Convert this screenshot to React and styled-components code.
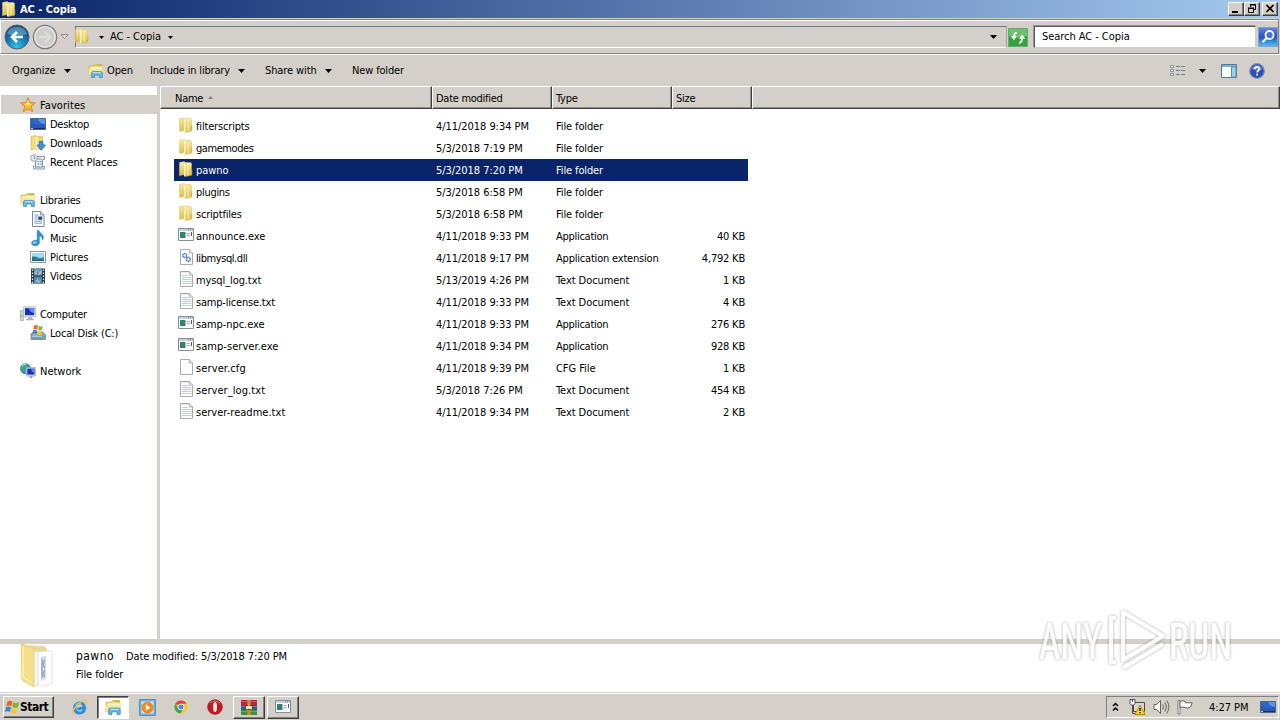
import React from "react";
import styled, { createGlobalStyle, css } from "styled-components";

const FACE = "#d4cfc8";

const GlobalStyle = createGlobalStyle`
  * {
    box-sizing: border-box;
  }

  body {
    margin: 0;
    overflow: hidden;
    background: #fff;
    color: #000;
    font-family: "DejaVu Sans Condensed", "DejaVu Sans", sans-serif;
    font-stretch: condensed;
    font-size: 11px;
    line-height: 16px;
    letter-spacing: -0.3px;
    white-space: nowrap;
  }

  svg {
    display: block;
    flex: none;
  }
`;

/* ---------- icons ---------- */

const FolderIcon = ({ size = 16 }) => (
  <svg width={size} height={size} viewBox="0 0 16 16">
    <defs>
      <linearGradient id="folderSide" x1="0" x2="0" y1="0" y2="1">
        <stop offset="0" stopColor="#f8eba6" />
        <stop offset="1" stopColor="#dcbc4c" />
      </linearGradient>
    </defs>
    <path d="M1.500 1.500 6.500.500v13L1.500 14.500z" fill="url(#folderSide)" stroke="#dcc468" strokeWidth=".5" />
    <path d="M7 1.500h5.500l1 1v11.800L7 15.500z" fill="url(#folderSide)" stroke="#d8bd5c" strokeWidth=".5" />
    <path d="M6 1.500h1.600v13.600l-1.600.5z" fill="#fdf2b8" />
    <path d="M10 2.500v11.500" stroke="#f7e898" strokeWidth="1.400" />
    <path d="M13.200 8.500h1v5h-1z" fill="#cfae47" />
  </svg>
);

const LibraryIcon = ({ size = 16 }) => (
  <svg width={size} height={size} viewBox="0 0 16 16">
    <path d="M1 3h5l1-1.500h7V12H1z" fill="#f3da78" stroke="#c9a944" strokeWidth=".7" />
    <path d="M2.500 4.200h11.800v5H2.500z" fill="#fff6c5" />
    <path d="M9 2.400h4" stroke="#7fc387" />
    <path d="M.8 6h13.800v6H.8z" fill="#f8e595" />
    <path d="M3.500 14.500V10q0-1.500 1.500-1.500h7.500q1.800 0 1.800 1.500v4.500h-3V12H6.500v2.500z" fill="#66b9e3" stroke="#3a86b8" strokeWidth=".7" />
    <path d="M5 9.700h7.800" stroke="#c3ebfa" />
  </svg>
);

const StarIcon = () => (
  <svg width="16" height="16" viewBox="0 0 16 16">
    <path d="m8 .8 2 4.900 5.400.3-4.100 3.400 1.400 5.300L8 11.800l-4.700 2.900 1.400-5.300L.6 6 6 5.700z" fill="#fcbf35" stroke="#e57d20" />
    <path d="m8 3 1.200 3.700 3.200.3-4.400 1-4-.9L6.800 6.600z" fill="#fff0a0" />
  </svg>
);

const DesktopIcon = () => (
  <svg width="16" height="16" viewBox="0 0 16 16">
    <path d="M.5 2.500h15v11H.5z" fill="#2857b6" stroke="#53647e" />
    <path d="M1 3h14v5Q8 10 1 7z" fill="#2a68d0" />
    <path d="M8 3h7v5q-5 0-7-5z" fill="#5597e6" />
    <path d="M1 12h14v1H1z" fill="#182f61" />
    <path d="M1 12h2v1H1z" fill="#9bd8ff" />
  </svg>
);

const DownloadsIcon = () => (
  <svg width="16" height="16" viewBox="0 0 16 16">
    <path d="M1 1.500 6 .5v12.700L1 15z" fill="#f0dc7c" stroke="#d1b14c" strokeWidth=".6" />
    <path d="M6 1.500h6.500v12L6 15z" fill="#ecd36c" stroke="#d1b14c" strokeWidth=".6" />
    <path d="M5.500 1.500h2v13h-2z" fill="#fff4ba" />
    <path d="M9.500 6.500h3.400V10h2.600l-4.300 5.200L7 10h2.500z" fill="#3a96dd" stroke="#216bb1" strokeWidth=".8" />
  </svg>
);

const RecentIcon = () => (
  <svg width="16" height="16" viewBox="0 0 16 16">
    <path d="M5.500 2.500h9v3h-2v7h2v2.500h-11v-3h2z" fill="#e8edf2" stroke="#8c97a2" />
    <path d="M7.500 5h4M7.500 7.500h1.700m1 0h1.600M7.500 10h1.700m1 0h1.600M5 13h8" stroke="#6f8ba3" />
    <circle cx="4" cy="4" r="3.300" fill="#edf4f8" stroke="#9aa6b0" />
    <path d="M4 2v2.300h1.600" fill="none" stroke="#5b7389" strokeWidth=".8" />
  </svg>
);

const DocumentIcon = () => (
  <svg width="16" height="16" viewBox="0 0 16 16">
    <path d="M2.500.5h8l3.500 3.300v11.700H2.500z" fill="#f7fbfe" stroke="#76889d" />
    <path d="M10.500.5V4H14" fill="#ccd9e6" stroke="#76889d" strokeWidth=".8" />
    <path d="M4.500 4h4m-4 2h3m-3 2h3m-3 2.200h7.500m-7.500 2h7.500" stroke="#7c93b4" strokeWidth=".9" />
    <path d="M8.200 5.500h4v3.300h-4z" fill="#274d88" />
  </svg>
);

const MusicIcon = () => (
  <svg width="16" height="16" viewBox="0 0 16 16">
    <path d="M7.200.6h1.800c.6 3 5 3.600 4.300 7.400-.3 1.500-1 2-1.200 2.300.8-3-1-4.200-2.800-4.600v6.800c0 2-1.700 3.200-3.900 3.200-2.400 0-3.800-1-3.800-2.500 0-2.100 2.300-3.400 5.600-2.900z" fill="#2d91d1" stroke="#1d6fae" strokeWidth=".5" />
    <ellipse cx="4.700" cy="12.600" rx="2" ry="1.200" fill="#8fd5f5" />
  </svg>
);

const PicturesIcon = () => (
  <svg width="16" height="16" viewBox="0 0 16 16">
    <path d="M.5 2.500h15v11H.5z" fill="#fff" stroke="#8d969e" />
    <path d="M2 4h12v8H2z" fill="#a6daf2" />
    <path d="M2 8q4-1 6 .5T14 8v4H2z" fill="#2787a5" />
    <path d="M2 7.500q3 0 5 2l-5 1z" fill="#3a7452" />
    <path d="M2 11h12v1H2z" fill="#155a87" />
  </svg>
);

const VideosIcon = () => (
  <svg width="16" height="16" viewBox="0 0 16 16">
    <path d="M1 .5h14v15H1z" fill="#293441" />
    <path d="M4 1h8v6.500H4z" fill="#5e9cbe" />
    <path d="M4 8.500h8V15H4z" fill="#4788af" />
    <path d="m4 5 3-3 2 2 3-2v3L9 7zM5 13l3-3 3 2-2 3z" fill="#92c4d8" />
    <path d="m7 3 2 2-2 1zm1 7 2 2-2 1z" fill="#ad5c4e" />
    <path d="M2.500 1.500v14M13.500 1.500v14" stroke="#e5ebef" strokeWidth="1.300" strokeDasharray="1.500 1.500" />
  </svg>
);

const ComputerIcon = () => (
  <svg width="16" height="16" viewBox="0 0 16 16">
    <path d="M.5 4.500h2.800v10H.5z" fill="#d7e0d8" stroke="#9aa79f" strokeWidth=".8" />
    <path d="M1.200 9h1.400v2H1.200z" fill="#65c460" />
    <path d="M3.700.800h11.800v10H3.700z" fill="#e4e8ee" stroke="#a9b1bc" strokeWidth=".8" />
    <path d="M5 2.200h9.200v7H5z" fill="#162fc0" />
    <path d="M9 2.200h5.200v4.500Q9.500 6.500 9 2.200z" fill="#6790ed" />
    <path d="M8 11.200h4v1.500h2v1.500H6v-1.500h2z" fill="#a9b1bb" />
  </svg>
);

const DiskIcon = () => (
  <svg width="16" height="16" viewBox="0 0 16 16">
    <path d="m1 9 2-2h10l2.500 3v4.500H1z" fill="#a0abb4" stroke="#67747d" strokeWidth=".7" />
    <path d="M1.300 10.500h14v3.500h-14z" fill="#6f9ab1" />
    <path d="M2 11.300h10" stroke="#b8d7e5" />
    <path d="M12.500 12h1.800v1.300h-1.800z" fill="#77e06b" />
    <path d="M4 .500Q6-.300 8 .500L7.300 4.500q-2-.800-4 0z" fill="#ee6933" />
    <path d="M8.700 1q2 .9 4 0L12 5q-2 .9-4 0z" fill="#82bd3e" />
    <path d="M3.100 5.300q2-.900 4 0L6.500 9q-2-.800-4 0z" fill="#4188d8" />
    <path d="M7.800 5.700q2 .900 4 0L11.200 9.500q-2 .800-4 0z" fill="#f5c837" />
  </svg>
);

const NetworkIcon = () => (
  <svg width="16" height="16" viewBox="0 0 16 16">
    <circle cx="5.500" cy="5.700" r="5.200" fill="#3b91c6" stroke="#35799c" strokeWidth=".5" />
    <path d="M2 3q2-2 5-2l-1 3-2 1v2L1 8zM6 6l3 1-2 4-2-2z" fill="#48ae4f" />
    <path d="M2 3q2-2 4-2" fill="none" stroke="#c8eefa" />
    <path d="M6.300 4.500h9.200v8.500H6.300z" fill="#dce4ee" stroke="#9aa7b8" strokeWidth=".7" />
    <path d="M7.300 5.600h7.200v6H7.300z" fill="#1732bd" />
    <path d="M11 5.600h3.500v4q-3 0-3.500-4z" fill="#5d88ea" />
    <path d="M9.500 13h3v2h-3z" fill="#9aa5b3" />
  </svg>
);

const ExeIcon = () => (
  <svg width="16" height="16" viewBox="0 0 16 16">
    <path d="M.5 1.500h15v12H.5z" fill="#fff" stroke="#868e98" />
    <path d="M1 2h14v2H1z" fill="#c7d2de" />
    <path d="M10 2.800h1m1 0h1m1 0h.6" stroke="#6d7987" />
    <path d="M2 5h5.500v6H2z" fill="#35806f" />
    <path d="M8.500 6.500H12m-3.500 2H12" stroke="#a8b7cb" />
    <path d="M13.500 5v4" stroke="#3d5c85" />
  </svg>
);

const Gear = ({ cx, cy }) => (
  <circle cx={cx} cy={cy} r="2" fill="#e1eefb" stroke="#4978bd" strokeWidth="1.400" strokeDasharray="1.400 .5" />
);

const PageIcon = ({ kind }) => (
  <svg width="16" height="16" viewBox="0 0 16 16">
    <path d="M2.500.5h9L14.500 4v11.500h-12z" fill="#fcfdfd" stroke="#a8abae" />
    <path d="M11.300.7v3.400h3.200" fill="#e2e6e8" stroke="#a8abae" strokeWidth=".8" />
    {kind === "txt" && (
      <>
        <path d="M4 4.500h6M4 6.500h9.500M4 8.500h9.500M4 10.500h9.500M4 12.500h9.500" stroke="#c0ced5" />
        <path d="M3.500.8h8" stroke="#8b9296" strokeDasharray="1 1" />
      </>
    )}
    {kind === "dll" && (
      <>
        <Gear cx={6.700} cy={6.500} />
        <Gear cx={10.300} cy={10.300} />
      </>
    )}
  </svg>
);

const WindowsLogo = () => (
  <svg width="17" height="17" viewBox="0 0 17 17">
    <path d="M3.500 2.500q2.500-1.700 5 0L7.400 7.300q-2.300-1.600-5 0z" fill="#ec5f2b" />
    <path d="M9.300 3q2.700 1.700 6 .3l-1.500 4.900q-2.800 1.200-5.500-.4z" fill="#79b832" />
    <path d="M2.100 8.200q2.700-1.600 5 0l-1.200 4.900q-2.400-1.500-5.200 0z" fill="#3c87dc" />
    <path d="M8 8.800q2.700 1.600 5.600.4l-1.400 4.800q-2.700 1.200-5.400-.3z" fill="#fac331" />
  </svg>
);

const IeIcon = () => (
  <svg width="17" height="17" viewBox="0 0 17 17">
    <g transform="rotate(-12 8.500 9)">
      <path d="M13.400 11q-1.300 3-4.700 3-4.900 0-4.900-5t4.900-5q5 0 4.900 5.600H6.200" fill="none" stroke="#2b90da" strokeWidth="2.900" />
      <path d="M5 5.500q3-2.500 6.500-.7" fill="none" stroke="#8fd3f7" />
    </g>
    <path d="M2.500 15.500C-1.500 13 10.500-.500 15 1.500c1.200.7.700 2.100.2 3" fill="none" stroke="#f2c338" strokeWidth="1.300" />
  </svg>
);

const MediaIcon = () => (
  <svg width="17" height="17" viewBox="0 0 17 17">
    <path d="M.5.500h16v16H.5z" fill="#6fb0e2" stroke="#5b8dbb" />
    <path d="M2.500 2.500h12v12h-12z" fill="#cfe6f2" />
    <circle cx="8.500" cy="8.500" r="5.500" fill="#f58a1f" stroke="#d36e12" strokeWidth=".6" />
    <path d="m6.800 5.300 4.500 3.200-4.500 3.200z" fill="#fff" />
  </svg>
);

const ChromeIcon = () => (
  <svg width="16" height="16" viewBox="0 0 16 16">
    <circle cx="8" cy="8" r="6.500" fill="#f6c934" />
    <path d="M8 8 2.300 4.800A6.500 6.500 0 0 1 13.700 4.800H8z" fill="#df4639" />
    <path d="M2.300 4.800A6.500 6.500 0 0 0 7.500 14.500L10.500 9.500 8 8 5 9.300z" fill="#42a44f" />
    <circle cx="8" cy="8" r="3.200" fill="#fff" />
    <circle cx="8" cy="8" r="2.500" fill="#4a88e4" />
  </svg>
);

const OperaIcon = () => (
  <svg width="16" height="16" viewBox="0 0 16 16">
    <circle cx="8" cy="8" r="7.300" fill="#c51a20" stroke="#961117" strokeWidth=".7" />
    <path d="M3 4q5-4 10 0" fill="none" stroke="#e76d6d" />
    <ellipse cx="8" cy="8" rx="2" ry="5" fill="#f6e7e6" />
  </svg>
);

const WinrarIcon = () => (
  <svg width="18" height="17" viewBox="0 0 18 17">
    <path d="M1 1h16v5H1z" fill="#b8263a" />
    <path d="M1 6h16v5H1z" fill="#3155a9" />
    <path d="M1 11h16v5H1z" fill="#3d8f42" />
    <path d="M1 2.500h16M1 7.500h16M1 12.500h16" stroke="#d8a0b5" strokeWidth=".4" />
    <path d="M7.300 1h3.400v15H7.300z" fill="#c88a38" />
    <path d="M5.500 6.500h7v4h-7z" fill="#e8cf94" stroke="#5b4425" />
    <path d="M9 5.500v4M7 7.500v3M11 7.500v3" stroke="#fff" strokeWidth=".8" />
  </svg>
);

const BackIcon = () => (
  <svg width="26" height="26" viewBox="0 0 26 26">
    <defs>
      <radialGradient id="backFill" cx=".5" cy=".9" r=".9">
        <stop offset="0" stopColor="#37c1e6" />
        <stop offset=".5" stopColor="#1476b1" />
        <stop offset="1" stopColor="#153f76" />
      </radialGradient>
    </defs>
    <circle cx="13" cy="13" r="12" fill="url(#backFill)" stroke="#4d6476" />
    <path d="M3 10a10.500 10.500 0 0 1 20 0q-10 3-20 0z" fill="#9fc8df" opacity=".45" />
    <path d="M13 8 8 13l5 5M8.500 13H19" fill="none" stroke="#fff" strokeWidth="2.700" />
  </svg>
);

const ForwardIcon = () => (
  <svg width="26" height="26" viewBox="0 0 26 26">
    <circle cx="13" cy="13" r="11.700" fill="#cfcdca" stroke="#777b80" strokeWidth="1.200" />
    <circle cx="13" cy="13" r="10" fill="none" stroke="#e4e3e1" strokeWidth="1.400" />
    <path d="m13 8 5 5-5 5M17.500 13H7" fill="none" stroke="#dfdddb" strokeWidth="2.400" />
  </svg>
);

const RefreshIcon = () => (
  <svg width="20" height="19" viewBox="0 0 20 19">
    <path d="M.5.500h19v18H.5z" fill="#35a23c" stroke="#6aa873" />
    <path d="M1 1h18v7Q10 11 1 8z" fill="#69c26b" />
    <path d="M9 4.700Q6 4.900 6 8.500" fill="none" stroke="#fff" strokeWidth="1.800" />
    <path d="M2.700 8h6.200L6 12.200z" fill="#fff" />
    <path d="M11 15q3.200-.4 3-5" fill="none" stroke="#fff" strokeWidth="1.800" />
    <path d="M11 10.700h6.200L14 6.500z" fill="#fff" />
  </svg>
);

const SearchIcon = () => (
  <svg width="20" height="20" viewBox="0 0 20 20">
    <defs>
      <linearGradient id="searchFill" x1="0" x2="0" y1="0" y2="1">
        <stop offset="0" stopColor="#6a85d6" />
        <stop offset=".5" stopColor="#2a50c0" />
        <stop offset="1" stopColor="#45c8f2" />
      </linearGradient>
    </defs>
    <path d="M.5.500h19v19H.5z" fill="url(#searchFill)" stroke="#8c9ec4" />
    <circle cx="11.500" cy="8" r="4" fill="#4a70d0" stroke="#fff" strokeWidth="1.800" />
    <path d="m8.500 11.200-4 4" stroke="#fff" strokeWidth="2.300" />
  </svg>
);

const ViewIcon = () => (
  <svg width="16" height="14" viewBox="0 0 16 14">
    <path d="M.5 1.500h3v2h-3zM.5 5.500h3v2h-3zM.5 9.500h3v2h-3z" fill="#fff" stroke="#8290a2" />
    <path d="M6 2.500h4m1 0h4M6 6.500h4m1 0h4M6 10.500h4m1 0h4" stroke="#707b8b" />
  </svg>
);

const PreviewIcon = () => (
  <svg width="16" height="14" viewBox="0 0 16 14">
    <path d="M.5.500h15v13H.5z" fill="#fff" stroke="#52799e" />
    <path d="M1 1h14v2H1z" fill="#7faed0" />
    <path d="M10.500 3h4.500v10h-4.500z" fill="#a0d2ea" stroke="#5d8daf" />
  </svg>
);

const HelpIcon = () => (
  <svg width="16" height="16" viewBox="0 0 16 16">
    <circle cx="8" cy="8" r="7.300" fill="#2b50b4" stroke="#8191b1" strokeWidth="1.200" />
    <path d="M2.500 6a6 6 0 0 1 11 0q-5 3-11 0z" fill="#6a87d1" />
    <path d="M5.700 6q.1-2.200 2.400-2.200T10.400 6q0 1-1.200 1.700T8.100 9.500M8.100 10.800v1.700" fill="none" stroke="#fff" strokeWidth="1.700" />
  </svg>
);

const BigFolderIcon = () => (
  <svg width="34" height="46" viewBox="0 0 34 46">
    <path d="M3 2 24 3l3 3v32l-14 1z" fill="#ead994" />
    <path d="M18 9 32 8v33l-14 2z" fill="#fff" stroke="#e3e6ea" />
    <path d="m21 14 5-1v23l-5 2z" fill="#d2dce8" />
    <path d="M22 16v19M24.500 17q-2 4 0 8m0 2q-2 4 0 7" fill="none" stroke="#7890ac" />
    <path d="m13 9 5-1v34l-5 1z" fill="#f8f8f4" stroke="#d5d2c4" strokeWidth=".6" />
    <path d="M1 .500 14 6v38L2 37z" fill="#f5df88" stroke="#ead27f" />
    <path d="M3 4v30l9 6" fill="none" stroke="#fff0ae" strokeWidth="1.500" />
  </svg>
);

const NetTrayIcon = () => (
  <svg width="17" height="16" viewBox="0 0 17 16">
    <path d="M4.500 3.500h11v9h-11z" fill="#d9d7d3" stroke="#4c4b48" />
    <path d="M1 .500h5v4l-1.500 1.700H2.500L1 4.500z" fill="#fff" stroke="#4c4b48" />
    <path d="M3.500 6v8.500H9M3.500 1v2" fill="none" stroke="#4c4b48" />
    <path d="M11 6 16 15.500H6z" fill="#ffd722" stroke="#b58800" />
    <path d="M11 9v3m0 1v1.300" stroke="#000" strokeWidth="1.300" />
  </svg>
);

const SpeakerIcon = () => (
  <svg width="17" height="16" viewBox="0 0 17 16">
    <path d="M1 5.500h2.500l4-4v13l-4-4H1z" fill="#fff" stroke="#66635f" />
    <path d="M9.500 5.500q1.800 2.500 0 5M11.700 3.500q3.300 4.500 0 9M13.800 1.500q4.200 6.500 0 13" fill="none" stroke="#777571" strokeWidth="1.100" />
  </svg>
);

const FlagIcon = () => (
  <svg width="17" height="16" viewBox="0 0 17 16">
    <path d="M1 1.500h2v13.500H1z" fill="#fff" stroke="#66635f" strokeWidth=".8" />
    <path d="M3 2.500q3-1.500 5.500 0v1.300h6.700L13.500 8q-2.500 2-5.500.500-2.500-1-5 0z" fill="#fff" stroke="#66635f" />
  </svg>
);

const ChevronsUp = () => (
  <svg width="7" height="10" viewBox="0 0 7 10">
    <path d="M1 4 3.500 1.500 6 4M1 8.500 3.500 6 6 8.500" fill="none" stroke="#000" strokeWidth="1.500" />
  </svg>
);

const Caret = ({ small }) => (
  <svg width={small ? 5 : 7} height={small ? 3 : 4} viewBox={small ? "0 0 5 3" : "0 0 7 4"}>
    <path d={small ? "M0 0h5L2.500 3z" : "M0 0h7L3.500 4z"} fill="#000" />
  </svg>
);

/* ---------- title and address bars ---------- */

const Desktop = styled.div`
  width: 1280px;
  height: 720px;
  display: flex;
  flex-direction: column;
  background: ${FACE};
  overflow: hidden;
`;

const TitleBar = styled.div`
  height: 18px;
  display: flex;
  align-items: center;
  padding: 0 2px 0 1px;
  background: linear-gradient(90deg, #0a246a, #a6caf0);
  color: #fff;
  font-weight: bold;

  span {
    flex: 1;
    margin-left: 3px;
    padding-top: 1px;
    letter-spacing: -0.05px;
  }
`;

const CaptionButton = styled.div`
  width: 16px;
  height: 14px;
  margin-left: ${(p) => p.$gap || 0}px;
  background: ${FACE};
  border: 1px solid;
  border-color: #fff #404040 #404040 #fff;
  box-shadow: inset -1px -1px #808080;
`;

const AddressBar = styled.div`
  height: 35px;
  margin-top: 1px;
  margin-right: 1px;
  display: flex;
  align-items: center;
  padding: 1px 0 0 4px;
  border: 1px solid #85827d;
  border-left-color: #fff;
  box-shadow: inset 0 1px #fff;
`;

const NavButtons = styled.div`
  display: flex;
  align-items: center;
  gap: 2px;
  width: 70px;
  margin-left: -1px;
  margin-right: 1px;
`;

const AddressField = styled.div`
  width: 932px;
  height: 22px;
  display: flex;
  align-items: center;
  border: 1px solid;
  border-color: #6e7c88 #aaa69f #fff #6e7c88;
  padding-right: 9px;

  .crumb {
    margin: 0 7px 0 6px;
    letter-spacing: -0.05px;
  }

  > svg:first-child {
    margin: -2px 9px 0 -2px;
  }
`;

const Spacer = styled.div`
  flex: 1;
`;

const SearchField = styled.div`
  width: 222px;
  height: 22px;
  margin: 0 2px 0 6px;
  padding: 2px 7px;
  background: #fff;
  border: 1px solid;
  border-color: #55585a #d4cfc8 #d4cfc8 #55585a;
  box-shadow: -1px -1px #96938e;
  letter-spacing: -0.05px;
`;

/* ---------- command bar ---------- */

const CommandBar = styled.div`
  height: 32px;
  display: flex;
  align-items: center;
  padding: 0 15px 0 12px;
  border-top: 1px solid #fff;
`;

const Command = styled.div`
  display: flex;
  align-items: center;
  gap: ${(p) => p.$gap || 8}px;
  width: ${(p) => p.$w}px;
  letter-spacing: ${(p) => p.$track ?? -0.15}px;
`;

/* ---------- panes ---------- */

const Panes = styled.div`
  height: 553px;
  display: flex;
  background: #fff;
`;

const Sidebar = styled.div`
  width: 160px;
  padding-top: 9px;
  border-right: 3px solid ${FACE};
  box-shadow: inset -1px 0 #fff;
`;

const TreeItem = styled.div`
  height: 19px;
  display: flex;
  align-items: center;
  gap: 4px;
  margin-left: 1px;
  padding-top: 2px;
  padding-left: ${(p) => (p.$child ? 29 : 19)}px;
  margin-top: ${(p) => (p.$first ? 19 : 0)}px;
  background: ${(p) => (p.$active ? FACE : "transparent")};
  letter-spacing: ${(p) => p.$track ?? -0.25}px;

  svg {
    margin-top: -2px;
  }
`;

const FileList = styled.div`
  flex: 1;
`;

const HeaderRow = styled.div`
  height: 23px;
  display: flex;
  background: ${FACE};
`;

const HeaderCell = styled.div`
  display: flex;
  align-items: center;
  gap: 5px;
  padding-left: ${(p) => p.$pad || 3}px;
  padding-top: 2px;
  border: 1px solid;
  border-color: #fff #404040 #404040 #fff;
  box-shadow: inset -1px -1px #918e88;
  letter-spacing: -0.27px;
  ${(p) =>
    p.$w
      ? css`
          width: ${p.$w}px;
        `
      : css`
          flex: 1;
        `}
`;

const Rows = styled.div`
  width: 574px;
  margin: 6px 0 0 14px;
`;

const Row = styled.div`
  height: 22px;
  display: grid;
  grid-template-columns: 262px 120px 120px 1fr;
  align-items: center;
  padding: 2px 3px 0 0;
  background: ${(p) => (p.$selected ? "#0a246a" : "transparent")};
  color: ${(p) => (p.$selected ? "#fff" : "#000")};
`;

const NameCell = styled.div`
  display: flex;
  align-items: center;
  gap: 2px;
  padding-left: 4px;
  height: 16px;
  letter-spacing: ${(p) => p.$track}px;

  svg {
    margin-top: -4px;
  }
`;

const Cell = styled.div`
  text-align: ${(p) => (p.$right ? "right" : "left")};
  letter-spacing: ${(p) => p.$track ?? -0.2}px;
`;

/* ---------- details pane and taskbar ---------- */

const Details = styled.div`
  height: 53px;
  display: flex;
  padding: 3px 0 0 20px;
  background: #fff;
  border-top: 5px solid #d4d1ca;
  line-height: 18px;
  letter-spacing: -0.1px;

  svg {
    margin-top: -4px;
  }

  div {
    padding-left: 22px;
  }

  b {
    display: inline-block;
    width: 50px;
    font-size: 12px;
    font-weight: normal;
    letter-spacing: 0.45px;
  }
`;

const Taskbar = styled.div`
  flex: 1;
  display: flex;
  align-items: center;
  padding: 1px 1px 0 3px;
  border-top: 1px solid #d4cfc8;
  box-shadow: inset 0 1px #fff;
`;

const StartButton = styled.div`
  width: 51px;
  height: 22px;
  margin-right: 9px;
  display: flex;
  align-items: center;
  border: 1px solid;
  border-color: #fff #404040 #404040 #fff;
  box-shadow: inset -1px -1px #808080;
  font-weight: bold;
  font-size: 12px;
  letter-spacing: -0.5px;

  svg {
    margin-right: -1px;
  }
`;

const TaskItem = styled.div`
  width: 32px;
  height: 23px;
  margin-right: 2px;
  display: flex;
  align-items: center;
  justify-content: center;
  border: 1px solid transparent;
  ${(p) =>
    p.$raised &&
    css`
      border-color: #fff #404040 #404040 #fff;
      box-shadow: inset -1px -1px #808080;
    `}
  ${(p) =>
    p.$pressed &&
    css`
      background: #fff;
      border-color: #404040 #fff #fff #404040;
      box-shadow: inset 1px 1px #808080;
    `}
`;

const Tray = styled.div`
  width: 173px;
  height: 22px;
  display: flex;
  align-items: center;
  padding-left: 5px;
  border: 1px solid;
  border-color: #808080 #fff #fff #808080;
`;

const TrayIcons = styled.div`
  display: flex;
  gap: 7px;
  margin-left: 10px;
`;

const Clock = styled.div`
  margin: 0 11px 0 15px;
  padding-top: 2px;
  letter-spacing: -0.05px;
`;

const Watermark = styled.svg`
  position: absolute;
  left: 1030px;
  top: 599px;
  opacity: 0.85;
  filter: drop-shadow(0 0 1.5px rgba(90, 90, 90, 0.6));
  font-family: Roboto, "Liberation Sans", sans-serif;
  letter-spacing: 0;
`;

const tree = [
  { name: "Favorites", icon: <StarIcon />, active: true, track: 0.08 },
  { name: "Desktop", icon: <DesktopIcon />, child: true },
  { name: "Downloads", icon: <DownloadsIcon />, child: true },
  { name: "Recent Places", icon: <RecentIcon />, child: true, track: -0.1 },
  { name: "Libraries", icon: <LibraryIcon />, first: true },
  { name: "Documents", icon: <DocumentIcon />, child: true, track: -0.35 },
  { name: "Music", icon: <MusicIcon />, child: true, track: -0.35 },
  { name: "Pictures", icon: <PicturesIcon />, child: true, track: -0.1 },
  { name: "Videos", icon: <VideosIcon />, child: true, track: -0.2 },
  { name: "Computer", icon: <ComputerIcon />, first: true, track: -0.3 },
  { name: "Local Disk (C:)", icon: <DiskIcon />, child: true, track: -0.2 },
  { name: "Network", icon: <NetworkIcon />, first: true, track: 0 },
];

// name, letter spacing of the name, date, type, size, icon
const files = [
  ["filterscripts", -0.17, "4/11/2018 9:34 PM", "File folder", "", "folder"],
  ["gamemodes", -0.43, "5/3/2018 7:19 PM", "File folder", "", "folder"],
  ["pawno", -0.05, "5/3/2018 7:20 PM", "File folder", "", "folder"],
  ["plugins", -0.3, "5/3/2018 6:58 PM", "File folder", "", "folder"],
  ["scriptfiles", -0.2, "5/3/2018 6:58 PM", "File folder", "", "folder"],
  ["announce.exe", 0, "4/11/2018 9:33 PM", "Application", "40 KB", "exe"],
  ["libmysql.dll", -0.42, "4/11/2018 9:17 PM", "Application extension", "4,792 KB", "dll"],
  ["mysql_log.txt", -0.1, "5/13/2019 4:26 PM", "Text Document", "1 KB", "txt"],
  ["samp-license.txt", -0.2, "4/11/2018 9:33 PM", "Text Document", "4 KB", "txt"],
  ["samp-npc.exe", -0.08, "4/11/2018 9:33 PM", "Application", "276 KB", "exe"],
  ["samp-server.exe", 0.05, "4/11/2018 9:34 PM", "Application", "928 KB", "exe"],
  ["server.cfg", 0.12, "4/11/2018 9:39 PM", "CFG File", "1 KB", "cfg"],
  ["server_log.txt", 0.07, "5/3/2018 7:26 PM", "Text Document", "454 KB", "txt"],
  ["server-readme.txt", 0.02, "4/11/2018 9:34 PM", "Text Document", "2 KB", "txt"],
];

const typeTrack = {
  "File folder": -0.12,
  Application: -0.28,
  "Application extension": -0.2,
  "Text Document": -0.07,
  "CFG File": -0.05,
};

const FileIcon = ({ kind }) => {
  if (kind === "folder") return <FolderIcon />;
  if (kind === "exe") return <ExeIcon />;
  return <PageIcon kind={kind} />;
};

const App = () => (
  <Desktop>
    <GlobalStyle />
    <TitleBar>
      <FolderIcon />
      <span>AC - Copia</span>
      <CaptionButton>
        <svg width="14" height="12">
          <path d="M3 9h6" stroke="#000" strokeWidth="2" />
        </svg>
      </CaptionButton>
      <CaptionButton>
        <svg width="14" height="12">
          <path d="M5.500 4V1.500h5v5H9M5 2h6M3.500 5.500h5v4h-5zM3 5h6" fill="none" stroke="#000" />
        </svg>
      </CaptionButton>
      <CaptionButton $gap={2}>
        <svg width="14" height="12">
          <path d="m3.500 2 7 7m0-7-7 7" stroke="#000" strokeWidth="1.700" />
        </svg>
      </CaptionButton>
    </TitleBar>

    <AddressBar>
      <NavButtons>
        <BackIcon />
        <ForwardIcon />
        <svg width="9" height="6" viewBox="0 0 9 6">
          <path d="M1 .7h7L4.500 4.500z" fill="#eee" stroke="#85827d" />
        </svg>
      </NavButtons>
      <AddressField>
        <FolderIcon />
        <Caret small />
        <span className="crumb">AC - Copia</span>
        <Caret small />
        <Spacer />
        <Caret />
      </AddressField>
      <Spacer />
      <RefreshIcon />
      <SearchField>Search AC - Copia</SearchField>
      <SearchIcon />
    </AddressBar>

    <CommandBar>
      <Command $w={76} $track={-0.1}>
        Organize <Caret />
      </Command>
      <Command $w={62} $gap={3}>
        <LibraryIcon /> Open
      </Command>
      <Command $w={115} $track={-0.18}>
        Include in library <Caret />
      </Command>
      <Command $w={87} $track={-0.1}>
        Share with <Caret />
      </Command>
      <Command $w={60}>New folder</Command>
      <Spacer />
      <Command $w={51} $gap={13}>
        <ViewIcon /> <Caret />
      </Command>
      <Command $w={44} $gap={12}>
        <PreviewIcon /> <HelpIcon />
      </Command>
    </CommandBar>

    <Panes>
      <Sidebar>
        {tree.map((item) => (
          <TreeItem
            key={item.name}
            $child={item.child}
            $first={item.first}
            $active={item.active}
            $track={item.track}
          >
            {item.icon}
            {item.name}
          </TreeItem>
        ))}
      </Sidebar>
      <FileList>
        <HeaderRow>
          <HeaderCell $w={272} $pad={14}>
            Name
            <svg width="5" height="5">
              <path d="M0 3h5L2.500 0z" fill="#85827d" />
            </svg>
          </HeaderCell>
          <HeaderCell $w={120}>Date modified</HeaderCell>
          <HeaderCell $w={120}>Type</HeaderCell>
          <HeaderCell $w={80}>Size</HeaderCell>
          <HeaderCell />
        </HeaderRow>
        <Rows>
          {files.map(([name, track, date, type, size, kind]) => (
            <Row key={name} $selected={name === "pawno"}>
              <NameCell $track={track}>
                <FileIcon kind={kind} />
                {name}
              </NameCell>
              <Cell $track={-0.05}>{date}</Cell>
              <Cell $track={typeTrack[type]}>{type}</Cell>
              <Cell $right>{size}</Cell>
            </Row>
          ))}
        </Rows>
      </FileList>
    </Panes>

    <Details>
      <BigFolderIcon />
      <div>
        <b>pawno</b>Date modified: 5/3/2018 7:20 PM
        <br />
        File folder
      </div>
    </Details>

    <Taskbar>
      <StartButton>
        <WindowsLogo />
        Start
      </StartButton>
      <TaskItem>
        <IeIcon />
      </TaskItem>
      <TaskItem $pressed>
        <LibraryIcon size={17} />
      </TaskItem>
      <TaskItem>
        <MediaIcon />
      </TaskItem>
      <TaskItem>
        <ChromeIcon />
      </TaskItem>
      <TaskItem>
        <OperaIcon />
      </TaskItem>
      <TaskItem $raised>
        <WinrarIcon />
      </TaskItem>
      <TaskItem $raised>
        <ExeIcon />
      </TaskItem>
      <Spacer />
      <Tray>
        <ChevronsUp />
        <TrayIcons>
          <NetTrayIcon />
          <SpeakerIcon />
          <FlagIcon />
        </TrayIcons>
        <Clock>4:27 PM</Clock>
        <DesktopIcon />
      </Tray>
    </Taskbar>

    <Watermark width="240" height="100" viewBox="0 0 240 100">
      <g fill="#fff" stroke="#fff" strokeWidth=".6" fontSize="50">
        <text x="9" y="60" textLength="63" lengthAdjust="spacingAndGlyphs">
          ANY
        </text>
        <text x="139" y="60" textLength="63" lengthAdjust="spacingAndGlyphs">
          RUN
        </text>
      </g>
      <g fill="none" stroke="#fff" strokeWidth="4" strokeLinejoin="round">
        <path d="M93 13 133 37 93 61z" />
        <path d="M86 19h-5v44h5M93 69 133 45" />
      </g>
    </Watermark>
  </Desktop>
);

export default App;
